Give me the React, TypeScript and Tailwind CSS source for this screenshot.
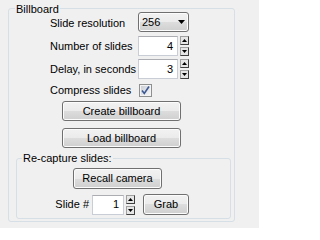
import React from "react";

const btnCls =
  "flex items-center justify-center rounded-[3px] border border-[#707070] bg-[linear-gradient(#f2f2f2,#ebebeb_50%,#dddddd_50%,#cfcfcf)] shadow-[inset_0_0_0_1px_#fcfcfc] text-black";

function Arrow({ up }: { up: boolean }) {
  return (
    <div className="flex h-[9px] w-[9px] items-center justify-center border border-[#a0a0a0] border-r-[#404040] border-b-[#404040] bg-[#e6e6e6]">
      <svg width="5" height="3" viewBox="0 0 5 3">
        {up ? <path d="M2.5 0 L5 3 L0 3Z" fill="#000" /> : <path d="M0 0 L5 0 L2.5 3Z" fill="#000" />}
      </svg>
    </div>
  );
}

function Spin({ value, w }: { value: string; w: string }) {
  return (
    <div className="flex items-center">
      <div
        className={`flex h-[20px] ${w} items-center justify-end border border-[#c9ced6] border-t-[#abadb3] bg-white pr-[4px] text-black`}
      >
        {value}
      </div>
      <div className="ml-[2px] flex flex-col gap-[2px]">
        <Arrow up />
        <Arrow up={false} />
      </div>
    </div>
  );
}

export default function App() {
  return (
    <div
      className="h-[228px] w-[259px] overflow-hidden bg-[#f0f0f0] pt-[8px] pl-[8px] text-[11px] leading-[13px] text-black"
      style={{ fontFamily: '"Liberation Sans", Arial, sans-serif' }}
    >
      <div className="relative h-[214px] w-[227px] rounded-[3px] border border-[#d5dfe5] pt-[3px]">
        <span className="absolute left-[6px] top-[-6px] bg-[#f0f0f0] px-[1px]">Billboard</span>

        <div className="pl-[41px]">
          <div className="flex h-[20px] items-center">
            <span className="w-[88px] pt-[2px]">Slide resolution</span>
            <div className={`${btnCls} h-[20px] w-[51px] !justify-between pl-[3px] pr-[3px]`}>
              <span>256</span>
              <svg width="7" height="4" viewBox="0 0 7 4">
                <path d="M0 0 L7 0 L3.5 4Z" fill="#000" />
              </svg>
            </div>
          </div>
          <div className="mt-[4px] flex h-[20px] items-center">
            <span className="w-[88px]">Number of slides</span>
            <Spin value="4" w="w-[40px]" />
          </div>
          <div className="mt-[3px] flex h-[20px] items-center">
            <span className="w-[88px]">Delay, in seconds</span>
            <Spin value="3" w="w-[40px]" />
          </div>
          <div className="mt-[5px] flex h-[13px] items-center">
            <span className="w-[89px]">Compress slides</span>
            <svg width="13" height="13" viewBox="0 0 13 13">
              <defs>
                <linearGradient id="cb" x1="0" y1="0" x2="1" y2="1">
                  <stop offset="0" stopColor="#cbcfd5" />
                  <stop offset="1" stopColor="#f6f6f6" />
                </linearGradient>
              </defs>
              <rect x="0.5" y="0.5" width="12" height="12" fill="#f4f4f4" stroke="#8e8f8f" />
              <rect x="2" y="2" width="9" height="9" fill="url(#cb)" />
              <path d="M3 6.5 L5.3 9.5 L10 2.5" fill="none" stroke="#3b5a94" strokeWidth="1.6" />
            </svg>
          </div>
        </div>

        <div className="mt-[4px] flex flex-col items-center">
          <div className={`${btnCls} h-[20px] w-[119px]`}>Create billboard</div>
          <div className={`${btnCls} mt-[7px] h-[20px] w-[119px]`}>Load billboard</div>
        </div>

        <div className="relative ml-[7px] mt-[10px] h-[61px] w-[215px] rounded-[3px] border border-[#d5dfe5]">
          <span className="absolute left-[5px] top-[-7px] bg-[#f0f0f0] px-[1px]">Re-capture slides:</span>
          <div className={`${btnCls} ml-[56px] mt-[9px] h-[21px] w-[89px]`}>Recall camera</div>
          <div className="mt-[5px] flex h-[21px] items-center">
            <span className="w-[75px] pr-[3px] text-right">Slide #</span>
            <Spin value="1" w="w-[32px]" />
            <div className={`${btnCls} ml-[8px] h-[21px] w-[46px]`}>Grab</div>
          </div>
        </div>
      </div>
    </div>
  );
}
